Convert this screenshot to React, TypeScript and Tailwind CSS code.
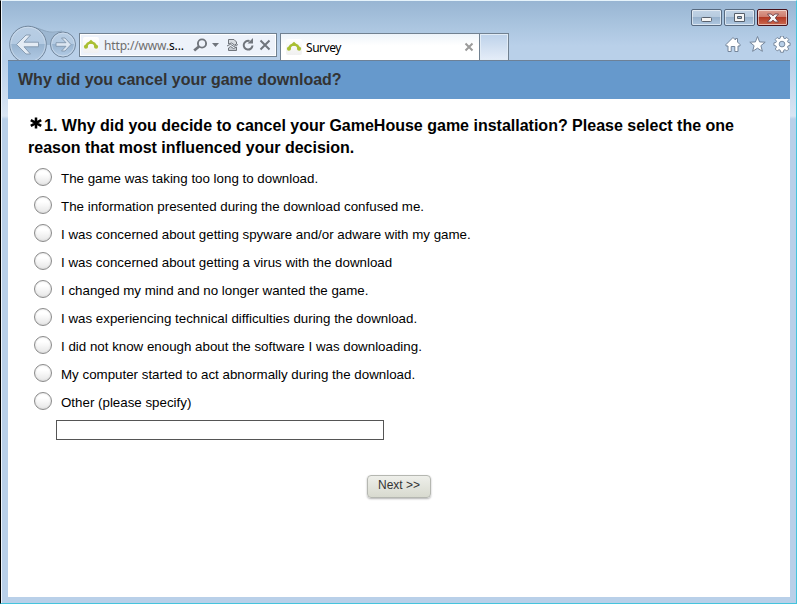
import React from "react";

const reasons = [
  "The game was taking too long to download.",
  "The information presented during the download confused me.",
  "I was concerned about getting spyware and/or adware with my game.",
  "I was concerned about getting a virus with the download",
  "I changed my mind and no longer wanted the game.",
  "I was experiencing technical difficulties during the download.",
  "I did not know enough about the software I was downloading.",
  "My computer started to act abnormally during the download.",
  "Other (please specify)",
];

function NavButtons() {
  return (
    <svg width="72" height="36" viewBox="0 0 72 36" className="block shrink-0">
      <defs>
        <linearGradient id="disc" x1="0" y1="0" x2="0" y2="1">
          <stop offset="0" stopColor="#b9cee4" />
          <stop offset="0.49" stopColor="#b3cae2" />
          <stop offset="0.5" stopColor="#98b4d0" />
          <stop offset="1" stopColor="#b4cce6" />
        </linearGradient>
      </defs>
      <path d="M26 2C36 4 38 9 55 7L44 20H36z" fill="#9db7d1" />
      <path d="M28 3C37 5 39 9 54 6" fill="none" stroke="#88a0b8" strokeWidth="0.8" />
      <circle cx="20" cy="19.5" r="18.3" fill="url(#disc)" stroke="#71859b" />
      <circle cx="20" cy="19.5" r="17.2" fill="none" stroke="#d3e0ee" strokeOpacity="0.7" />
      <circle cx="55" cy="19.5" r="12.5" fill="url(#disc)" stroke="#71859b" />
      <circle cx="55" cy="19.5" r="11.4" fill="none" stroke="#d3e0ee" strokeOpacity="0.7" />
      <path d="M8.500 19.500 18 10H22.500L16 17.200H30.500V21.800H16L22.500 29H18z" fill="#e3ebf4" stroke="#8196ad" strokeWidth="0.9" strokeLinejoin="round" />
      <path d="M63 19.500 57 13H53.500L58 17.700H48V21.300H58L53.500 26H57z" fill="#dce6f1" stroke="#8196ad" strokeWidth="0.9" strokeLinejoin="round" />
    </svg>
  );
}

function SiteIcon() {
  return (
    <svg width="16" height="16" viewBox="0 0 16 16" className="block shrink-0">
      <defs>
        <linearGradient id="site" x1="0" y1="0" x2="0" y2="1">
          <stop offset="0" stopColor="#fff" />
          <stop offset="1" stopColor="#f0f0f0" />
        </linearGradient>
      </defs>
      <rect width="16" height="16" rx="2" fill="url(#site)" />
      <path d="M3.300 10.500C3.300 3.800 12.700 3.800 12.700 10.500" fill="none" stroke="#a9bf33" strokeWidth="2.700" />
      <path d="M6.300 4.200 8 2.700l1.700 1.500v2.500H6.300z" fill="#a9bf33" />
      <circle cx="2.900" cy="9.700" r="2" fill="#a9bf33" />
      <circle cx="13.100" cy="9.700" r="2" fill="#a9bf33" />
    </svg>
  );
}

function AddressIcons() {
  return (
    <svg width="80" height="16" viewBox="0 0 80 16" className="block shrink-0" fill="none" stroke="#70757c">
      <circle cx="10" cy="6.500" r="4.100" strokeWidth="1.900" />
      <path d="M7 9.500 2.200 13.500" strokeWidth="2.700" />
      <path d="M20 6h7l-3.500 4z" fill="#70757c" stroke="none" />
      <path d="M36.500 7V2.500H42L44.500 5V7L42.500 8 39.500 6z" fill="#d8dce2" />
      <path d="M36.500 13.500V11L38.500 9.500 41.500 11.500 44.500 10V13.500z" fill="#c4c9d0" />
      <path d="M35 9 38.500 7.300 42 9.500 46 7.500" />
      <path d="M57.500 4A4.400 4.400 0 1 0 60.500 8.500" strokeWidth="2" />
      <path d="M61 1v5.500h-5.500z" fill="#70757c" stroke="none" />
      <path d="M68.500 3.500l9 9M77.500 3.500l-9 9" strokeWidth="2" />
    </svg>
  );
}

function ToolIcons() {
  return (
    <svg width="66" height="18" viewBox="0 0 66 18" className="block" fill="#fff" stroke="#74859a" strokeWidth="1" strokeLinejoin="round">
      <path d="M1 8.500 8 1.500 10.500 4V2.500H12.500V6L15 8.500V10H13V15.500H9.800V10.500H6.200V15.500H3V10H1z" />
      <path d="M32.500 .5 34.600 5.900 40.200 6.200 35.900 9.700 37.400 15.300 32.500 12.200 27.600 15.300 29.100 9.700 24.800 6.200 30.400 5.900z" />
      <path transform="translate(2.850 .1) scale(.95)" fillRule="evenodd" d="M55.500 0h3l.4 2.200 1.200.6 2-1.300 2 2-1.300 2 .6 1.200 2.100.4v2.800l-2.100.4-.6 1.300 1.300 2-2 2-2-1.300-1.200.5-.4 2.200h-3l-.4-2.200-1.200-.5-2 1.300-2-2 1.300-2-.6-1.300-2.100-.4V7.100l2.100-.4.6-1.200-1.300-2 2-2 2 1.300 1.200-.6zM57 5.400a3 3 0 1 0 0 6A3 3 0 0 0 57 5.400z" />
    </svg>
  );
}

function WindowButtons() {
  const frame = "flex h-[17px] items-center justify-center rounded-[2px] border shadow-[inset_0_0_0_1px_rgba(255,255,255,0.55)]";
  const blue = "border-[#586a80] bg-[linear-gradient(#c1d3e6_0%,#b6cade_48%,#98b2cd_50%,#b0c8e1_100%)]";
  return (
    <div className="flex gap-[2px]">
      <div className={`${frame} ${blue} w-[31px]`}>
        <svg width="12" height="10"><rect x=".5" y="4.500" width="10" height="4" rx="1" fill="#f5f5f5" stroke="#59616d" /></svg>
      </div>
      <div className={`${frame} ${blue} w-[31px]`}>
        <svg width="12" height="10"><path fillRule="evenodd" d="M.5.5h10v8H.5zM3.500 3.500v2h4v-2z" fill="#f7f7f7" stroke="#555e6a" /></svg>
      </div>
      <div className={`${frame} w-[31px] border-[#48121b] bg-[linear-gradient(#dda092_0%,#cc7a6c_48%,#b33a25_50%,#cb6950_100%)]`}>
        <svg width="14" height="10"><path d="M1.500 1h3.700L7 2.900 8.800 1H12.500L9.300 5l3.200 4H8.800L7 7.100 5.200 9H1.500l3.200-4z" fill="#f7f7f7" stroke="#6c4149" strokeWidth=".9" /></svg>
      </div>
    </div>
  );
}

export default function App() {
  return (
    <div className="flex h-[604px] w-[797px] flex-col overflow-hidden border-t border-r border-b border-l border-t-[#e6f3fb] border-r-[#45c4dd] border-b-[#45c4dd] border-l-black bg-[linear-gradient(90deg,#eef5fc_1px,transparent_1px),linear-gradient(#98b5d3_0px,#a8c3de_22px,#b9d0e9_45px,#b9d0e9_60px,#d9e5f3_115px,#b9d0e9_118px,#b9d0e9_604px)] font-['Liberation_Sans',Arial,sans-serif] text-black">
      <header className="flex h-[59px] shrink-0 pl-[7px]">
        <div className="flex pt-[24px]">
          <NavButtons />
        </div>
        <div className="mt-[32px] ml-[-1px] flex h-[24px] w-[198px] items-center border border-[#718191] bg-[#edf2fa] pl-[3px] shadow-[inset_0_0_0_1px_white]">
          <SiteIcon />
          <span className="ml-[5px] w-[88px] pt-[2px] font-['Noto_Sans',sans-serif] text-[12px] leading-4 tracking-[-0.15px] whitespace-nowrap text-[#6d6d6d]">
            http://www.<span className="text-black">s...</span>
          </span>
          <AddressIcons />
        </div>
        <div className="mt-[32px] ml-[3px] flex h-[27px] w-[200px] items-center border border-b-0 border-[#718191] bg-[linear-gradient(#eef4fa,#fff_45%)] pl-[5px]">
          <SiteIcon />
          <span className="ml-[4px] grow pt-[2px] font-['Noto_Sans',sans-serif] text-[12px] leading-4 tracking-[-0.45px]">Survey</span>
          <svg width="10" height="10" className="mr-[5px]"><path d="M1.500 1.500l7 7M8.500 1.500l-7 7" stroke="#9b9b9b" strokeWidth="2" /></svg>
        </div>
        <div className="mt-[32px] h-[27px] w-[29px] border border-b-0 border-l-0 border-[#718191] bg-[linear-gradient(#bdd2ea,#e5edf8)] shadow-[inset_0_0_0_1px_#e2ecf6]" />
        <div className="ml-auto flex flex-col pt-[8px]">
          <div className="flex justify-end pr-[8px]">
            <WindowButtons />
          </div>
          <div className="mt-[10px] flex justify-end pr-[5px]">
            <ToolIcons />
          </div>
        </div>
      </header>
      <main className="mr-[6px] ml-[7px] flex h-[537px] shrink-0 flex-col bg-white">
        <h1 className="h-[39px] shrink-0 border-t border-[#6d8197] bg-[#6699cc] pl-[10px] text-[16px] leading-[37px] font-bold whitespace-nowrap text-[#333]">
          Why did you cancel your game download?
        </h1>
        <h2 className="mt-[16px] pl-[20px] text-[16px] leading-[22px] font-bold whitespace-nowrap">
          <svg width="14" height="14" viewBox="0 0 14 14" className="ml-[1px] inline-block align-[1px]">
            <path d="M7 1.500v11M1.800 4.100l10.400 5.800M12.200 4.100 1.800 9.900" stroke="#000" strokeWidth="2.500" />
          </svg>
          <span className="ml-[1px]">1. Why did you decide to cancel your GameHouse game installation? Please select the one</span>
          <br />
          reason that most influenced your decision.
        </h2>
        <div className="mt-[4px] flex flex-col pl-[26px]">
          {reasons.map((reason) => (
            <label key={reason} className="flex h-[28px] items-center text-[13.33px] leading-4 whitespace-nowrap">
              <span className="-mt-[1px] h-[18px] w-[18px] rounded-full border border-[#8b8b8b] bg-[linear-gradient(#fff_30%,#e6e6e6)] shadow-[inset_0_0_2px_#ccc]" />
              <span className="ml-[9px] pt-[3px]">{reason}</span>
            </label>
          ))}
        </div>
        <input aria-label="Other reason" className="mt-[5px] ml-[48px] h-[20px] w-[328px] border border-[#555] bg-white" />
        <button className="mt-[35px] ml-[359px] h-[23px] w-[64px] rounded-[4px] border border-[#b5b7b1] bg-[linear-gradient(#eeefea,#d8dacf)] pb-[3px] text-[12px] leading-4 text-[#333] shadow-[0_1px_2px_rgba(0,0,0,0.3)]">
          Next &gt;&gt;
        </button>
      </main>
    </div>
  );
}
